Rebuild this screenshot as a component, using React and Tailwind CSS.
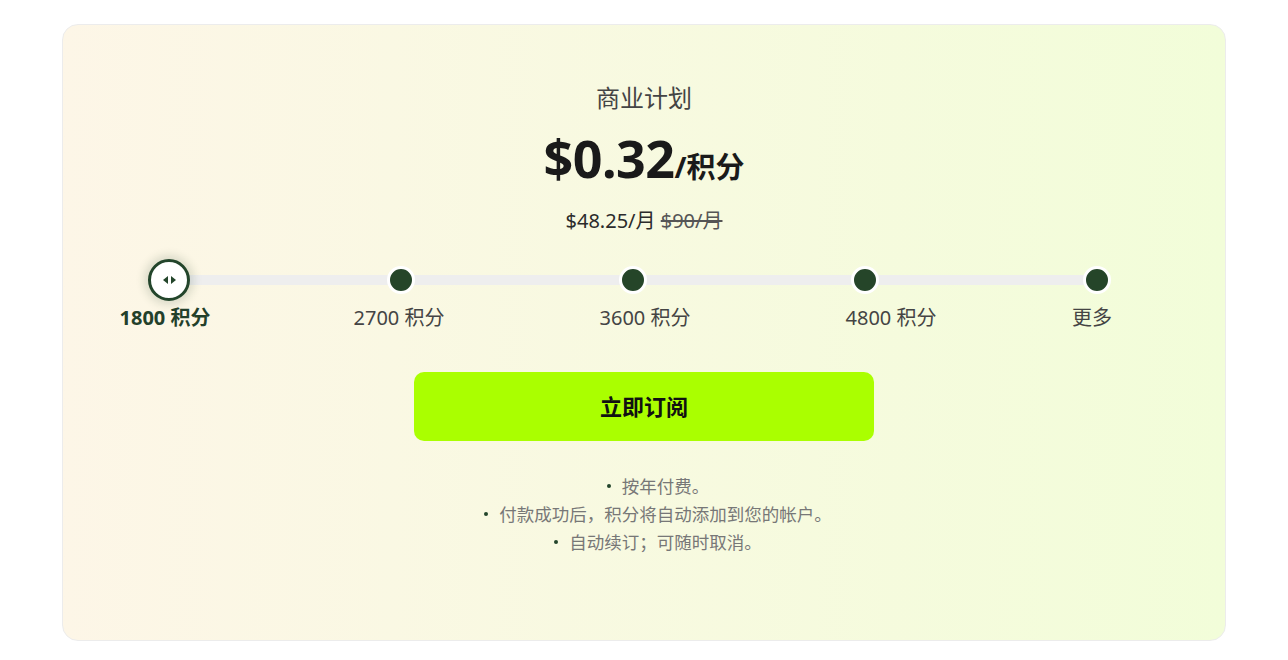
import React from "react";

const tiers = [
  { label: "1800 积分", pos: "left-[0%]", gap: "ml-0" },
  { label: "2700 积分", pos: "left-[25%]", gap: "ml-[114px]" },
  { label: "3600 积分", pos: "left-[50%]", gap: "ml-[126px]" },
  { label: "4800 积分", pos: "left-[75%]", gap: "ml-[126px]" },
  { label: "更多", pos: "left-[100%]", gap: "ml-[81px]" },
];

const notes = ["按年付费。", "付款成功后，积分将自动添加到您的帐户。", "自动续订；可随时取消。"];

export default function App() {
  return (
    <div
      className="min-h-screen bg-white px-[62px] pt-[24px] pb-[19px]"
      style={{ fontFamily: '"Noto Sans", Inter, "Noto Sans CJK SC", sans-serif' }}
    >
      <div className="h-[617px] rounded-[16px] border border-[#ececec] bg-linear-to-r from-[#fdf6e7] to-[#f2fdd9] flex flex-col items-center pt-[56px]">
        <h2 className="text-[24px] leading-[34px] text-[#444]">商业计划</h2>

        <div className="mt-[12px] flex items-baseline text-[#1a1a1a] font-bold">
          <span className="text-[52px] leading-[62px] tracking-[-0.5px]">$0.32</span>
          <span className="text-[29px]">/积分</span>
        </div>

        <div className="mt-[18px] text-[20px] leading-[28px] text-[#2b2b2b]">
          $48.25/月 <span className="line-through text-[#555]">$90/月</span>
        </div>

        {/* slider */}
        <div className="mt-[25px] w-full pl-[106px] pr-[128px]">
          <div className="relative h-[40px]">
            <div className="absolute inset-x-0 top-[15px] h-[10px] bg-[#eeeeee] rounded-full" />
            {tiers.map((t, i) =>
              i === 0 ? (
                <div
                  key={i}
                  className={`absolute ${t.pos} top-[-1px] -translate-x-1/2 w-[42px] h-[42px] rounded-full bg-white border-[3px] border-[#23452b] shadow-[0_0_8px_4px_rgba(35,69,43,0.15)] flex items-center justify-center gap-[3px]`}
                >
                  <span className="w-0 h-0 border-y-[4.5px] border-y-transparent border-r-[5px] border-r-[#23452b]" />
                  <span className="w-0 h-0 border-y-[4.5px] border-y-transparent border-l-[5px] border-l-[#23452b]" />
                </div>
              ) : (
                <div
                  key={i}
                  className={`absolute ${t.pos} top-[6px] -translate-x-1/2 w-[28px] h-[28px] rounded-full bg-[#254529] border-[3px] border-white`}
                />
              )
            )}
          </div>
        </div>
        <div className="mt-[4px] w-full pl-[42px] flex text-[20px] leading-[28px] text-[#444]">
          {tiers.map((t, i) => (
            <span
              key={i}
              className={`w-[120px] shrink-0 text-center ${t.gap} ${i === 0 ? "font-bold text-[#23402a]" : ""}`}
            >
              {t.label}
            </span>
          ))}
        </div>

        <button className="mt-[40px] w-[460px] h-[69px] rounded-[10px] bg-[#aaff00] text-[22px] font-bold text-[#111]">
          立即订阅
        </button>

        <ul className="mt-[31px] ml-[28px] flex flex-col items-center text-[17.5px] leading-[28px] text-[#777]">
          {notes.map((n, i) => (
            <li key={i} className="flex items-center gap-[11px]">
              <span className="w-[4px] h-[4px] rounded-full bg-[#23452b]" />
              {n}
            </li>
          ))}
        </ul>
      </div>
    </div>
  );
}
